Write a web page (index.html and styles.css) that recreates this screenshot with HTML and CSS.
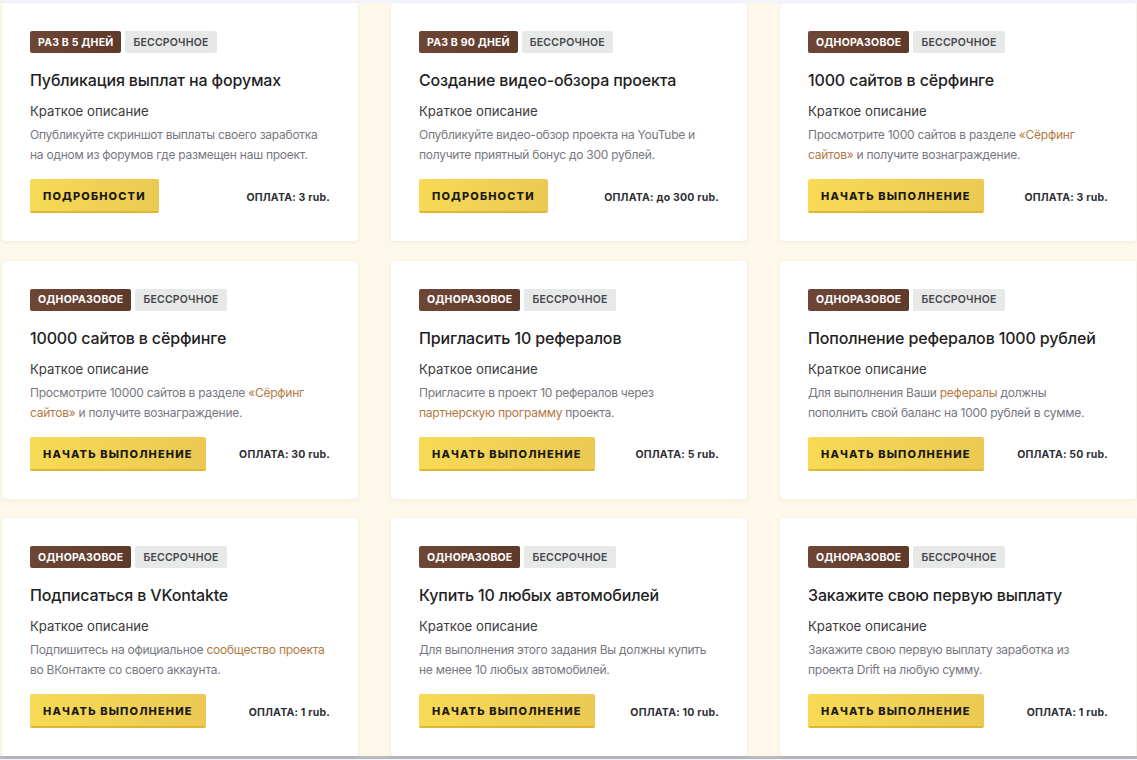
FILE: index.html
```html
<!DOCTYPE html>
<html lang="ru">
<head>
<meta charset="utf-8">
<title>Задания</title>
<link rel="stylesheet" href="styles.css">
</head>
<body>
<div class="topstrip"></div>
<main class="grid">
  <article class="card">
    <div class="badges"><span class="badge badge-dark">Раз в 5 дней</span><span class="badge badge-light">Бессрочное</span></div>
    <h2 class="title">Публикация выплат на форумах</h2>
    <div class="subtitle">Краткое описание</div>
    <p class="desc">Опубликуйте скриншот выплаты своего заработка на одном из форумов где размещен наш проект.</p>
    <div class="footer"><a class="btn">Подробности</a><span class="pay">ОПЛАТА: 3 rub.</span></div>
  </article>
  <article class="card">
    <div class="badges"><span class="badge badge-dark">Раз в 90 дней</span><span class="badge badge-light">Бессрочное</span></div>
    <h2 class="title">Создание видео-обзора проекта</h2>
    <div class="subtitle">Краткое описание</div>
    <p class="desc">Опубликуйте видео-обзор проекта на YouTube и получите приятный бонус до 300 рублей.</p>
    <div class="footer"><a class="btn">Подробности</a><span class="pay">ОПЛАТА: до 300 rub.</span></div>
  </article>
  <article class="card">
    <div class="badges"><span class="badge badge-dark">Одноразовое</span><span class="badge badge-light">Бессрочное</span></div>
    <h2 class="title">1000 сайтов в сёрфинге</h2>
    <div class="subtitle">Краткое описание</div>
    <p class="desc">Просмотрите 1000 сайтов в разделе <a class="link">«Сёрфинг сайтов»</a> и получите вознаграждение.</p>
    <div class="footer"><a class="btn">Начать выполнение</a><span class="pay">ОПЛАТА: 3 rub.</span></div>
  </article>

  <article class="card">
    <div class="badges"><span class="badge badge-dark">Одноразовое</span><span class="badge badge-light">Бессрочное</span></div>
    <h2 class="title">10000 сайтов в сёрфинге</h2>
    <div class="subtitle">Краткое описание</div>
    <p class="desc">Просмотрите 10000 сайтов в разделе <a class="link">«Сёрфинг сайтов»</a> и получите вознаграждение.</p>
    <div class="footer"><a class="btn">Начать выполнение</a><span class="pay">ОПЛАТА: 30 rub.</span></div>
  </article>
  <article class="card">
    <div class="badges"><span class="badge badge-dark">Одноразовое</span><span class="badge badge-light">Бессрочное</span></div>
    <h2 class="title">Пригласить 10 рефералов</h2>
    <div class="subtitle">Краткое описание</div>
    <p class="desc">Пригласите в проект 10 рефералов через <a class="link">партнерскую программу</a> проекта.</p>
    <div class="footer"><a class="btn">Начать выполнение</a><span class="pay">ОПЛАТА: 5 rub.</span></div>
  </article>
  <article class="card">
    <div class="badges"><span class="badge badge-dark">Одноразовое</span><span class="badge badge-light">Бессрочное</span></div>
    <h2 class="title">Пополнение рефералов 1000 рублей</h2>
    <div class="subtitle">Краткое описание</div>
    <p class="desc">Для выполнения Ваши <a class="link">рефералы</a> должны пополнить свой баланс на 1000 рублей в сумме.</p>
    <div class="footer"><a class="btn">Начать выполнение</a><span class="pay">ОПЛАТА: 50 rub.</span></div>
  </article>

  <article class="card">
    <div class="badges"><span class="badge badge-dark">Одноразовое</span><span class="badge badge-light">Бессрочное</span></div>
    <h2 class="title">Подписаться в VKontakte</h2>
    <div class="subtitle">Краткое описание</div>
    <p class="desc">Подпишитесь на официальное <a class="link">сообщество проекта</a> во ВКонтакте со своего аккаунта.</p>
    <div class="footer"><a class="btn">Начать выполнение</a><span class="pay">ОПЛАТА: 1 rub.</span></div>
  </article>
  <article class="card">
    <div class="badges"><span class="badge badge-dark">Одноразовое</span><span class="badge badge-light">Бессрочное</span></div>
    <h2 class="title">Купить 10 любых автомобилей</h2>
    <div class="subtitle">Краткое описание</div>
    <p class="desc">Для выполнения этого задания Вы должны купить не менее 10 любых автомобилей.</p>
    <div class="footer"><a class="btn">Начать выполнение</a><span class="pay">ОПЛАТА: 10 rub.</span></div>
  </article>
  <article class="card">
    <div class="badges"><span class="badge badge-dark">Одноразовое</span><span class="badge badge-light">Бессрочное</span></div>
    <h2 class="title">Закажите свою первую выплату</h2>
    <div class="subtitle">Краткое описание</div>
    <p class="desc">Закажите свою первую выплату заработка из проекта Drift на любую сумму.</p>
    <div class="footer"><a class="btn">Начать выполнение</a><span class="pay">ОПЛАТА: 1 rub.</span></div>
  </article>
</main>
<div class="bottomstrip"></div>
</body>
</html>
```

FILE: styles.css
```css
* { box-sizing: border-box; }

html, body {
  margin: 0;
  padding: 0;
  overflow: hidden;
}

body {
  background: #f3f3fb;
  font-family: Inter, "Noto Sans", "Liberation Sans", sans-serif;
  color: #222;
  width: 1137px;
  height: 760px;
}

.topstrip {
  height: 3px;
  background: #f3f3fb;
}

.grid {
  background: #fdf8ea;
  display: grid;
  grid-template-columns: 356px 356px 356px;
  column-gap: 33px;
  row-gap: 19.5px;
  padding-left: 2px;
  width: 1160px;
}

.card {
  background: #fff;
  border-radius: 4px;
  box-shadow: 0 1px 4px rgba(60, 50, 20, 0.07);
  padding: 28px;
  display: flex;
  flex-direction: column;
}

.badges {
  display: flex;
  gap: 4px;
  height: 22px;
}

.badge {
  display: inline-flex;
  align-items: center;
  height: 22px;
  padding: 0 8px;
  border-radius: 2px;
  font-size: 10.5px;
  font-weight: 700;
  text-transform: uppercase;
  letter-spacing: 0.2px;
}

.badge-dark {
  background: linear-gradient(90deg, #6e4636, #5e3a2b);
  color: #fff;
}

.badge-light {
  background: #e7e8e8;
  color: #45464a;
  font-weight: 600;
}

.title {
  margin: 15px 0 0;
  font-size: 16px;
  line-height: 24px;
  font-weight: 450;
  letter-spacing: -0.15px;
  color: #1f1f24;
  white-space: nowrap;
}

.subtitle {
  margin-top: 9px;
  font-size: 13.2px;
  line-height: 20px;
  color: #3c3a3c;
}

.desc {
  margin: 4px 0 0;
  font-size: 12px;
  line-height: 20px;
  color: #77777f;
  height: 40px;
  letter-spacing: -0.25px;
}

.link {
  color: #b27a43;
  text-decoration: none;
}

.footer {
  margin-top: 14px;
  display: flex;
  align-items: center;
  justify-content: space-between;
}

.btn {
  display: inline-flex;
  align-items: center;
  height: 34px;
  padding: 2px 13px 0;
  background: linear-gradient(90deg, #f7da55, #ebc953);
  border-bottom: 2px solid #ddb732;
  border-radius: 2px;
  font-size: 11px;
  font-weight: 800;
  text-transform: uppercase;
  letter-spacing: 1.15px;
  color: #1c1a16;
}

.pay {
  font-size: 10.5px;
  font-weight: 700;
  color: #2f2f36;
  letter-spacing: 0.2px;
  padding-top: 2px;
}

.bottomstrip {
  height: 2px;
  background: #f3f3fb;
  border-bottom: 3px solid #b8b9c0;
}
```
